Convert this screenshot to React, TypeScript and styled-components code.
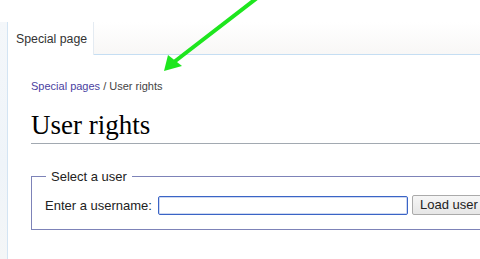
import { FC } from 'react';
import styled, { createGlobalStyle } from 'styled-components';

const GlobalStyle = createGlobalStyle`
    html, body {
        margin: 0;
        padding: 0;
        background: #fff;
    }
    body {
        font-family: "Liberation Sans", Arial, sans-serif;
        overflow: hidden;
    }
`;

const Shell = styled.div`
    position: relative;
    display: flex;
    width: 480px;
    height: 259px;
    overflow: hidden;
`;
const Rail = styled.aside`
    flex: none;
    width: 7px;
    margin-top: 22px;
    background: linear-gradient(to bottom, #f4f7fa 0%, #eff4f9 60%, #f4f6f7 100%);
`;
const Main = styled.main`
    flex: none;
    width: 620px;
    margin-top: 22px;
    border-left: 1px solid #d3e4f3;
`;
const TabBar = styled.nav`
    display: flex;
    height: 33px;
`;
const Tab = styled.div`
    box-sizing: border-box;
    padding: 10px 6px 0 8px;
    font-size: 12.3px;
    line-height: 15px;
    color: #333;
    background: #fff;
    border-right: 1px solid #e4ebf2;
`;
const TabFill = styled.div`
    flex: 1;
    background: linear-gradient(to bottom, #fff 0%, #f8f7f6 100%);
    border-bottom: 1px solid #c5def3;
`;
const Content = styled.section`
    padding: 0 0 0 23px;
`;
const Crumbs = styled.div`
    margin-top: 24px;
    font-size: 11px;
    line-height: 14px;
    color: #444;
    a {
        color: #4a3f9f;
        text-decoration: none;
    }
`;
const Title = styled.h1`
    margin: 16px 0 0;
    padding-bottom: 2px;
    font-family: "Liberation Serif", "Times New Roman", serif;
    font-weight: normal;
    font-size: 27px;
    line-height: 32px;
    color: #000;
    border-bottom: 1px solid #a2a9b1;
`;
const Fieldset = styled.fieldset`
    margin: 25px 0 0;
    padding: 11px 13px 14px;
    border: 1px solid #7d83b8;
`;
const Legend = styled.legend`
    margin-left: 1px;
    padding: 0 5px;
    font-size: 13px;
    line-height: 15px;
    color: #222;
`;
const Row = styled.div`
    display: flex;
    align-items: center;
    height: 20px;
`;
const Label = styled.label`
    font-size: 13px;
    line-height: 15px;
    color: #222;
    margin-right: 6px;
`;
const TextInput = styled.input`
    box-sizing: border-box;
    width: 250px;
    height: 19px;
    margin: 0 4px 0 0;
    padding: 1px 4px;
    border: 1px solid #3a64c6;
    border-radius: 2px;
    box-shadow: inset 0 0 0 1px rgba(58, 100, 198, 0.25);
    background: #fff;
    outline: none;
`;
const Button = styled.button`
    box-sizing: border-box;
    height: 20px;
    padding: 0 7px;
    font-family: "Liberation Sans", Arial, sans-serif;
    font-size: 13px;
    line-height: 16px;
    color: #222;
    background: linear-gradient(to bottom, #f6f6f6, #e6e6e6);
    border: 1px solid #aaa;
    border-radius: 2px;
    white-space: nowrap;
`;
const Pointer = styled.svg`
    position: absolute;
    left: 0;
    top: 0;
    pointer-events: none;
`;

const App: FC = () => {
    return <>
        <GlobalStyle />
        <Shell>
            <Rail />
            <Main>
                <TabBar>
                    <Tab>Special page</Tab>
                    <TabFill />
                </TabBar>
                <Content>
                    <Crumbs>
                        <a href="#">Special pages</a> / User rights
                    </Crumbs>
                    <Title>User rights</Title>
                    <Fieldset>
                        <Legend>Select a user</Legend>
                        <Row>
                            <Label htmlFor="username">Enter a username:</Label>
                            <TextInput id="username" type="text" />
                            <Button>Load user</Button>
                        </Row>
                    </Fieldset>
                </Content>
            </Main>
            {/* green annotation arrow drawn over the page */}
            <Pointer width="480" height="259" viewBox="0 0 480 259">
                <line x1="257" y1="-2" x2="174" y2="62" stroke="#1ee61e" strokeWidth="4" strokeLinecap="round" />
                <polygon points="164,71 168,55 182,66" fill="#1ee61e" />
            </Pointer>
        </Shell>
    </>
}

export default App;
